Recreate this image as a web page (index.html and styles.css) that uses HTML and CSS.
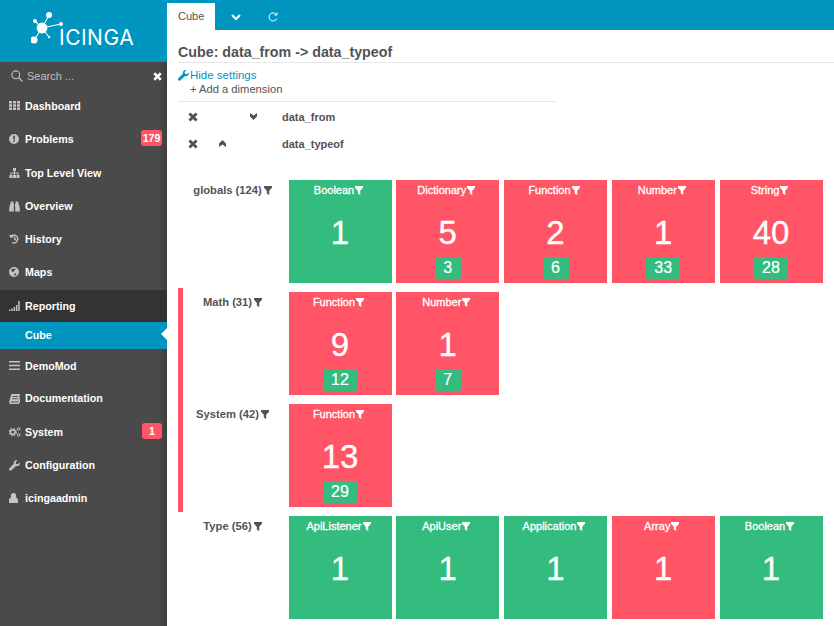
FILE: index.html
```html
<!DOCTYPE html>
<html lang="en">
<head>
<meta charset="utf-8">
<title>Cube: data_from -> data_typeof</title>
<link rel="stylesheet" href="styles.css">
</head>
<body>
<svg class="defs" width="0" height="0" aria-hidden="true">
  <symbol id="filter" viewBox="0 0 8 9"><path d="M0 0h8v1.800L5.200 4.800V9L2.800 7.600V4.800L0 1.800z"/></symbol>
  <symbol id="cross" viewBox="0 0 10 10"><path d="M2.400.4 5 3l2.600-2.600 2 2L7 5l2.600 2.600-2 2L5 7 2.400 9.600l-2-2L3 5 .4 2.400z"/></symbol>
  <symbol id="wrench" viewBox="0 0 12 12"><path d="M11.800 2.600 9.600 4.700 7.600 4.200 7.200 2.300 9.300.2C7.700-.3 5.900.6 5.300 2.200c-.2.700-.2 1.300 0 1.900L.5 8.900c-.7.700-.7 1.700 0 2.400s1.700.6 2.300 0l4.800-4.800c1.700.6 3.500-.2 4.100-1.900.2-.7.300-1.300.1-2z"/></symbol>
</svg>
<div class="app">
  <aside class="sidebar">
    <div class="logo">
      <svg class="logo-mark" width="33" height="36" viewBox="0 0 33 36">
        <g stroke="#fff" stroke-width="1.100"><path d="M11 16 18 3M11 16 4 9M11 16 30 12M11 16 3 28M11 16 18 25"/></g>
        <g fill="#fff"><circle cx="11" cy="16" r="5.400"/><circle cx="18" cy="3" r="3"/><circle cx="4" cy="9" r="2"/><circle cx="30" cy="12" r="2"/><circle cx="3" cy="28" r="3.500"/><circle cx="18" cy="25" r="1.200"/></g>
      </svg>
      <span class="logo-word">ICINGA</span>
    </div>
    <div class="search">
      <svg class="search-ico" width="12" height="12" viewBox="0 0 12 12"><circle cx="4.800" cy="4.800" r="3.900"/><path d="m7.700 7.700 3.800 3.800"/></svg>
      <span class="search-text">Search ...</span>
      <svg class="search-x" width="9" height="9"><use href="#cross"/></svg>
    </div>
    <nav class="nav">
      <a class="nav-item"><svg class="ico" width="11" height="9" viewBox="0 0 11 9"><path d="M0 0h3v2.500H0zM4 0h3v2.500H4zM8 0h3v2.500H8zM0 3.300h3v2.500H0zM4 3.300h3v2.500H4zM8 3.300h3v2.500H8zM0 6.500h3V9H0zM4 6.500h3V9H4zM8 6.500h3V9H8z"/></svg><span>Dashboard</span></a>
      <a class="nav-item"><svg class="ico" width="10" height="10" viewBox="0 0 10 10"><path fill-rule="evenodd" d="M5 0a5 5 0 1 1 0 10A5 5 0 0 1 5 0zM4.100 1.800l.2 3.900h1.400l.2-3.900zM4.200 6.500v1.600h1.600V6.500z"/></svg><span>Problems</span><b class="badge">179</b></a>
      <a class="nav-item"><svg class="ico" width="11" height="10" viewBox="0 0 11 10"><path d="M4 0h3v3H6v1.500h3.500V7h1v3h-3V7h1V5.500H6V7h1v3H4V7h1V5.500H2.500V7h1v3h-3V7h1V4.500H5V3H4z"/></svg><span>Top Level View</span></a>
      <a class="nav-item"><svg class="ico" width="11" height="11" viewBox="0 0 11 11"><path d="M2 .5h2.400v2.200H5V5H4.800v5.500H.2V7zM9 .5H6.600v2.200H6V5h.2v5.500h4.600V7z"/></svg><span>Overview</span></a>
      <a class="nav-item"><svg class="ico line" width="11" height="10" viewBox="0 0 11 10"><path d="M2 2.300A3.900 3.900 0 1 1 3 8.500M.9.800l1 2.500 2.500-.6M5.800 2.800v2.600l1.600.9"/></svg><span>History</span></a>
      <a class="nav-item"><svg class="ico" width="10" height="10" viewBox="0 0 10 10"><path fill-rule="evenodd" d="M5 0a5 5 0 1 1 0 10A5 5 0 0 1 5 0zM3 2 2 3.500 3.500 5 5 4.500 5.500 3 7 2.500 5.500 1.500zM6 6 5 8l1 .8L7.800 7z"/></svg><span>Maps</span></a>
      <a class="nav-item active-parent"><svg class="ico" width="11" height="10" viewBox="0 0 11 10"><path d="M0 8.500h1.500V10H0zM2.300 7.500h1.500V10H2.300zM4.600 6h1.500v4H4.600zM6.900 4h1.500v6H6.900zM9.200 0h1.500v10H9.200z"/></svg><span>Reporting</span></a>
      <a class="nav-item active-sub"><span>Cube</span></a>
      <a class="nav-item"><svg class="ico" width="11" height="9" viewBox="0 0 11 9"><path d="M0 0h11v1.500H0zM0 3.700h11v1.500H0zM0 7.400h11v1.500H0z"/></svg><span>DemoMod</span></a>
      <a class="nav-item doc"><svg class="ico" width="11" height="10" viewBox="0 0 11 10"><path fill-rule="evenodd" d="M2.500 0H11L9 7.500H2.500c-1 0-1 1 0 1H9L11 2v6L9.500 10H2C.3 10 0 8.500.2 7.500zM3.800 2l-.2 1H9l.2-1zM3.200 4.300 3 5.300h5.500l.2-1z"/></svg><span>Documentation</span></a>
      <a class="nav-item"><svg class="ico line" width="12" height="10" viewBox="0 0 12 10"><circle cx="3.800" cy="5" r="2.300" stroke-width="1.500"/><circle cx="3.800" cy="5" r="3.500" stroke-width="1.300" stroke-dasharray="1.500 1.250"/><circle cx="9.700" cy="2" r="1.300" stroke-width="1"/><circle cx="9.700" cy="8" r="1.300" stroke-width="1"/></svg><span>System</span><b class="badge badge-small">1</b></a>
      <a class="nav-item"><svg class="ico" width="11" height="11"><use href="#wrench"/></svg><span>Configuration</span></a>
      <a class="nav-item"><svg class="ico" width="9" height="10" viewBox="0 0 9 10"><path d="M4.500 0a2.700 2.700 0 0 1 2.200 4.300C8.200 4.800 9 6 9 8v2H0V8c0-2 .8-3.200 2.300-3.700A2.700 2.700 0 0 1 4.500 0z"/></svg><span>icingaadmin</span></a>
    </nav>
  </aside>
  <main class="main">
    <header class="topbar">
      <div class="tab">Cube</div>
      <svg class="top-chevron" width="10" height="7" viewBox="0 0 10 7"><path d="m1 1 4 4 4-4"/></svg>
      <svg class="top-refresh" width="10" height="10" viewBox="0 0 10 10"><path d="M8.800 6.500A4 4 0 1 1 8 2.200"/><path d="M9 .5V3H6.500"/></svg>
    </header>
    <section class="content">
      <h1 class="title">Cube: data_from -&gt; data_typeof</h1>
      <div class="settings">
        <a class="hide-link"><svg class="wrench" width="11" height="11"><use href="#wrench"/></svg>Hide settings</a>
        <a class="add-dim">+ Add a dimension</a>
      </div>
      <div class="dimensions">
        <div class="dim">
          <svg class="dim-x" width="10" height="10"><use href="#cross"/></svg>
          <span class="dim-up"></span>
          <svg class="dim-down" width="7" height="7" viewBox="0 0 7 7"><path d="M0 0 3.500 2.500 7 0v3.500L3.500 7 0 3.500z"/></svg>
          <strong class="dim-name">data_from</strong>
        </div>
        <div class="dim">
          <svg class="dim-x" width="10" height="10"><use href="#cross"/></svg>
          <svg class="dim-up" width="7" height="7" viewBox="0 0 7 7"><path d="M0 7 3.500 4.500 7 7V3.500L3.500 0 0 3.500z"/></svg>
          <span class="dim-down"></span>
          <strong class="dim-name">data_typeof</strong>
        </div>
      </div>
      <div class="cube">
        <div class="group">
          <div class="row">
            <div class="row-label">globals (124)<svg class="fl" width="8" height="9"><use href="#filter"/></svg></div>
            <div class="tiles">
              <div class="tile ok"><div class="tile-name">Boolean<svg class="fl" width="8" height="9"><use href="#filter"/></svg></div><div class="tile-num">1</div></div>
              <div class="tile bad"><div class="tile-name">Dictionary<svg class="fl" width="8" height="9"><use href="#filter"/></svg></div><div class="tile-num">5</div><span class="tile-sub">3</span></div>
              <div class="tile bad"><div class="tile-name">Function<svg class="fl" width="8" height="9"><use href="#filter"/></svg></div><div class="tile-num">2</div><span class="tile-sub">6</span></div>
              <div class="tile bad"><div class="tile-name">Number<svg class="fl" width="8" height="9"><use href="#filter"/></svg></div><div class="tile-num">1</div><span class="tile-sub">33</span></div>
              <div class="tile bad"><div class="tile-name">String<svg class="fl" width="8" height="9"><use href="#filter"/></svg></div><div class="tile-num">40</div><span class="tile-sub">28</span></div>
            </div>
          </div>
        </div>
        <div class="group flagged">
          <div class="row">
            <div class="row-label">Math (31)<svg class="fl" width="8" height="9"><use href="#filter"/></svg></div>
            <div class="tiles">
              <div class="tile bad"><div class="tile-name">Function<svg class="fl" width="8" height="9"><use href="#filter"/></svg></div><div class="tile-num">9</div><span class="tile-sub">12</span></div>
              <div class="tile bad"><div class="tile-name">Number<svg class="fl" width="8" height="9"><use href="#filter"/></svg></div><div class="tile-num">1</div><span class="tile-sub">7</span></div>
            </div>
          </div>
          <div class="row">
            <div class="row-label">System (42)<svg class="fl" width="8" height="9"><use href="#filter"/></svg></div>
            <div class="tiles">
              <div class="tile bad"><div class="tile-name">Function<svg class="fl" width="8" height="9"><use href="#filter"/></svg></div><div class="tile-num">13</div><span class="tile-sub">29</span></div>
            </div>
          </div>
        </div>
        <div class="group">
          <div class="row">
            <div class="row-label">Type (56)<svg class="fl" width="8" height="9"><use href="#filter"/></svg></div>
            <div class="tiles">
              <div class="tile ok"><div class="tile-name">ApiListener<svg class="fl" width="8" height="9"><use href="#filter"/></svg></div><div class="tile-num">1</div></div>
              <div class="tile ok"><div class="tile-name">ApiUser<svg class="fl" width="8" height="9"><use href="#filter"/></svg></div><div class="tile-num">1</div></div>
              <div class="tile ok"><div class="tile-name">Application<svg class="fl" width="8" height="9"><use href="#filter"/></svg></div><div class="tile-num">1</div></div>
              <div class="tile bad"><div class="tile-name">Array<svg class="fl" width="8" height="9"><use href="#filter"/></svg></div><div class="tile-num">1</div></div>
              <div class="tile ok"><div class="tile-name">Boolean<svg class="fl" width="8" height="9"><use href="#filter"/></svg></div><div class="tile-num">1</div></div>
            </div>
          </div>
        </div>
      </div>
    </section>
  </main>
</div>
</body>
</html>
```
FILE: styles.css
```css
html, body { margin: 0; padding: 0; height: 100%; overflow: hidden; }
body { font-family: "Liberation Sans", Arial, sans-serif; font-size: 11px; color: #535353; background: #fff; }
.defs { position: absolute; }
.app { display: flex; width: 834px; height: 626px; overflow: hidden; }

.sidebar { width: 167px; flex: none; background: linear-gradient(to right, #4a4a4a 0, #4a4a4a 158px, #3f3f3f 167px); color: #fff; display: flex; flex-direction: column; }
.logo { height: 62px; background: #0095bf; display: flex; align-items: flex-start; padding: 12px 0 0 31px; box-sizing: border-box; }
.logo-word { font-family: "Inter", sans-serif; font-weight: 400; font-size: 21px; line-height: 24px; letter-spacing: .5px; color: #fff; margin: 14px 0 0 -5px; }
.search { height: 27.600px; display: flex; align-items: center; padding-left: 11px; position: relative; }
.search-ico { margin-right: 4px; fill: none; stroke: #c4c4c4; stroke-width: 1.100; }
.search-text { color: #bdbdbd; font-size: 11px; }
.search-x { position: absolute; left: 152.500px; top: 9.500px; fill: #fff; }

.nav { display: flex; flex-direction: column; }
.nav-item { display: flex; align-items: center; height: 33.200px; flex: none; padding-left: 10px; font-weight: 700; font-size: 10.700px; color: #fff; position: relative; box-sizing: border-box; }
.nav-item .ico { position: absolute; left: 9px; top: 50%; margin-top: -5px; fill: #c4c4c4; }
.nav-item .ico.line { fill: none; stroke: #c4c4c4; stroke-width: 1.300; }
.nav-item span { margin-left: 15px; }
.doc { padding-bottom: 1px; }
.active-parent { background: #333; height: 32.200px; margin-top: 1px; }
.active-sub { background: #0095bf; height: 27px; }
.active-sub::after { content: ""; position: absolute; right: 0; top: 6.500px; border: 6.500px solid transparent; border-left: 0; border-right-color: #fff; }
.badge { position: absolute; right: 5px; top: 50%; margin-top: -9px; height: 16px; line-height: 16px; padding: 0 1.500px; border-radius: 3px; background: #ff5566; color: #fff; font-size: 10.700px; font-weight: 700; text-align: center; }
.badge-small { padding: 0 7px; }

.main { flex: 1; min-width: 0; display: flex; flex-direction: column; }
.topbar { height: 30px; background: #0095bf; display: flex; align-items: flex-end; position: relative; flex: none; }
.tab { width: 48px; height: 27px; background: #fff; color: #535353; font-size: 11px; line-height: 26px; padding-left: 11px; box-sizing: border-box; }
.top-chevron { margin: 0 0 9px 16px; fill: none; stroke: #fff; stroke-width: 2.200; }
.top-refresh { margin: 0 0 8px 27px; fill: none; stroke: #fff; stroke-width: 1; }

.content { padding: 0 0 0 11px; flex: 1; }
.title { margin: 0; height: 33px; line-height: 44px; font-size: 14.250px; font-weight: 700; color: #535353; border-bottom: 1px solid #e8e8e8; box-sizing: border-box; }
.settings { display: flex; flex-direction: column; height: 39px; width: 378px; border-bottom: 1px solid #e5e5e5; box-sizing: border-box; padding-top: 5px; }
.hide-link { color: #0095bf; font-size: 11.500px; line-height: 15px; display: flex; align-items: center; }
.wrench { fill: #0095bf; margin-right: 1px; }
.add-dim { font-size: 11.200px; line-height: 13px; padding-left: 12px; color: #535353; }
.dimensions { display: flex; flex-direction: column; padding-top: 1px; }
.dim { display: flex; align-items: center; height: 27px; }
.dim-x { fill: #535353; margin-left: 10px; flex: none; }
.dim-up { display: block; width: 7px; height: 7px; margin-left: 21px; flex: none; fill: #535353; }
.dim-down { display: block; width: 7px; height: 7px; margin-left: 24px; flex: none; fill: #535353; }
.dim-name { margin-left: 25px; font-weight: 700; font-size: 11px; }

.cube { padding-top: 19px; }
.group { border-left: 5px solid transparent; padding: 4px 0 5px; }
.group.flagged { border-left-color: #ff5566; }
.row { display: flex; }
.row + .row { margin-top: 9px; }
.row-label { width: 99px; margin-right: 6.500px; flex: none; text-align: center; font-weight: 700; font-size: 11.200px; line-height: 20px; }
.fl { fill: currentColor; margin-left: 2px; vertical-align: -1px; }
.tiles { display: flex; gap: 4.750px; }
.tile { width: 103px; height: 103px; color: #fff; text-align: center; display: flex; flex-direction: column; align-items: center; box-sizing: border-box; }
.ok { background: #34bc7f; }
.bad { background: #ff5566; }
.tile-name { font-size: 11px; line-height: 20px; height: 20px; -webkit-text-stroke: 0.300px #fff; }
.tile-name .fl { margin-left: 1px; margin-right: 3px; }
.tile-num { font-size: 33px; line-height: 36px; margin-top: 15px; -webkit-text-stroke: 0.300px #fff; }
.tile-sub { margin-top: 6px; background: #34bc7f; min-width: 10px; padding: 0 8px; height: 22px; line-height: 22px; font-size: 16px; border-radius: 2px; -webkit-text-stroke: 0.200px #fff; }
```
